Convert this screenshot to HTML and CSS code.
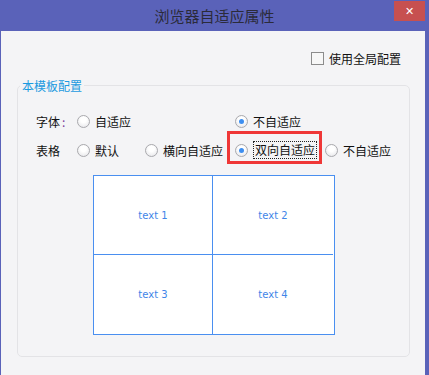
FILE: index.html
```html
<!DOCTYPE html>
<html>

<head>
    <meta name="viewport" content="width=device-width, initial-scale=1.0">
    <title>浏览器自适应属性</title>
    <link rel="stylesheet" href="styles.css">
</head>

<body>
    <div class="window">
        <div class="titlebar">
            <span></span>
            <span class="title">浏览器自适应属性</span>
            <span class="close-wrap"><span class="close">&#x2715;</span></span>
        </div>

        <div class="content">
            <div class="global-row">
                <span class="checkbox"></span>
                <span>使用全局配置</span>
            </div>

            <fieldset class="group">
                <legend>本模板配置</legend>

                <div class="options">
                    <span class="opt-label">字体<span class="colon">:</span></span>
                    <label class="option"><span class="radio"></span>自适应</label>
                    <span></span>
                    <label class="option"><span class="radio checked"></span>不自适应</label>
                    <span></span>

                    <span class="opt-label">表格</span>
                    <label class="option"><span class="radio"></span>默认</label>
                    <label class="option"><span class="radio"></span>横向自适应</label>
                    <label class="option highlight"><span class="radio checked"></span><span class="focus">双向自适应</span></label>
                    <label class="option"><span class="radio"></span>不自适应</label>
                </div>

                <div class="preview">
                    <div class="preview-cell">text 1</div>
                    <div class="preview-cell">text 2</div>
                    <div class="preview-cell">text 3</div>
                    <div class="preview-cell">text 4</div>
                </div>
            </fieldset>
        </div>
    </div>
</body>

</html>
```

FILE: styles.css
```css
body {
    margin: 0;
    padding: 0;
    font-family: "Noto Sans CJK SC", "Liberation Sans", sans-serif;
    font-size: 12px;
    color: #111;
}

.window {
    width: 429px;
    height: 375px;
    background: #5a62b9;
    display: flex;
    flex-direction: column;
}

.titlebar {
    height: 31px;
    display: grid;
    grid-template-columns: 1fr auto 1fr;
    align-items: start;
}

.title {
    font-size: 15px;
    line-height: 31px;
    color: #2b2b3a;
}

.close-wrap {
    display: flex;
    justify-content: flex-end;
    padding: 1px 4px 0 0;
}

.close {
    width: 31px;
    height: 20px;
    background: #c75050;
    color: #fff;
    font-size: 11px;
    font-weight: bold;
    font-family: "DejaVu Sans", sans-serif;
    display: flex;
    align-items: center;
    justify-content: center;
}

.content {
    flex: 1;
    margin: 0 4px 0 1px;
    background: #f4f4f6;
}

.global-row {
    display: flex;
    justify-content: flex-end;
    align-items: center;
    gap: 5px;
    padding: 18px 24px 0 0;
    height: 18px;
}

.checkbox {
    width: 11px;
    height: 11px;
    border: 1px solid #8c8c8c;
    background: #f7f7f7;
}

.group {
    margin: 10px 16px 0 16px;
    padding: 17px 18px 21px 18px;
    border: 1px solid #e3e3e6;
    border-radius: 5px;
}

.group legend {
    padding: 0 2px;
    margin-left: -16px;
    color: #1b9ae0;
    font-size: 12px;
}

.options {
    display: grid;
    grid-template-columns: 41px 68px 90px 90px auto;
    grid-auto-rows: 20px;
    row-gap: 9px;
    align-items: center;
}

.opt-label {
    white-space: nowrap;
}

.colon {
    color: #7a3a9a;
    margin-left: 2px;
}

.option {
    display: flex;
    align-items: center;
    gap: 5px;
    white-space: nowrap;
}

.radio {
    width: 11px;
    height: 11px;
    border: 1px solid #a9a9ad;
    border-radius: 50%;
    background: radial-gradient(circle at 50% 35%, #ffffff 30%, #e2e2e6 100%);
    display: flex;
    align-items: center;
    justify-content: center;
    flex: none;
}

.radio.checked::after {
    content: "";
    width: 5px;
    height: 5px;
    border-radius: 50%;
    background: #3d8ef0;
}

.highlight {
    position: relative;
}

.highlight::before {
    content: "";
    position: absolute;
    left: -8px;
    top: -10px;
    width: 89px;
    height: 27px;
    border: 3px solid #ef3737;
}

.focus {
    border: 1px dotted #222;
    padding: 0 1px;
    line-height: 16px;
}

.preview {
    margin: 15px 0 0 57px;
    width: 240px;
    display: grid;
    grid-template-columns: 119px 120px;
    grid-template-rows: 79px 79px;
    border: 1px solid #4a8ff0;
    background: #fff;
}

.preview-cell {
    display: flex;
    align-items: center;
    justify-content: center;
    font-family: "DejaVu Sans", sans-serif;
    font-size: 10px;
    color: #3f86e8;
}

.preview-cell:nth-child(odd) {
    border-right: 1px solid #4a8ff0;
}

.preview-cell:nth-child(-n+2) {
    border-bottom: 1px solid #4a8ff0;
}
```
